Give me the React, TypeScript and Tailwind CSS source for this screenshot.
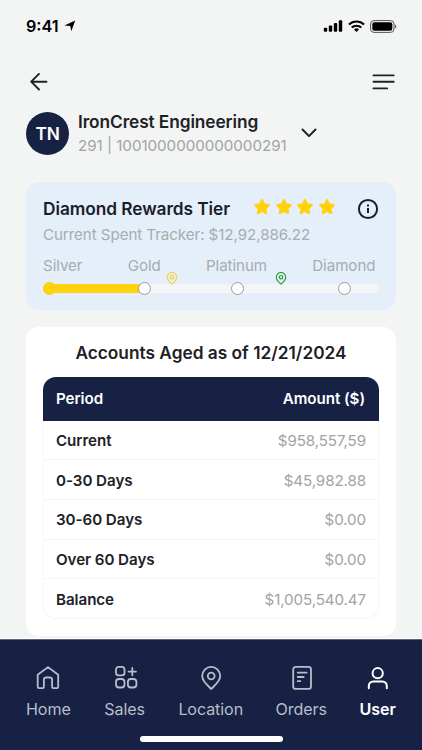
import type { ReactNode } from "react";

const agedAccounts = [
  { period: "Current", amount: "$958,557,59" },
  { period: "0-30 Days", amount: "$45,982.88" },
  { period: "30-60 Days", amount: "$0.00" },
  { period: "Over 60 Days", amount: "$0.00" },
  { period: "Balance", amount: "$1,005,540.47" },
];

const StatusBar = () => {
  return (
    <div className="flex h-[52px] items-center justify-between pr-[25px] pl-[26px] text-black">
      <div className="flex items-center gap-[5px]">
        <span className="w-[33px] text-[16.2px] font-semibold whitespace-nowrap">
          9:41
        </span>
        <svg width="12" height="12" viewBox="0 0 12 12" fill="currentColor">
          <path d="M11.2.6 7.3 11.2 6.2 6 .4 5.5Z" />
        </svg>
      </div>
      <div className="flex items-center gap-[5px]">
        <svg width="20" height="12" viewBox="0 0 20 12" fill="currentColor">
          <rect x="0.8" y="7.8" width="3.4" height="4" rx="1" />
          <rect x="5.8" y="5.6" width="3.4" height="6.2" rx="1" />
          <rect x="10.8" y="3" width="3.4" height="8.8" rx="1" />
          <rect x="15.8" y="0.2" width="3.4" height="11.6" rx="1" />
        </svg>
        <svg width="17" height="12" viewBox="0 0 17 12" fill="none" stroke="currentColor" strokeWidth="2.1">
          <path d="M.9 4.6a11 11 0 0 1 15.2 0" />
          <path d="M3.7 7.6a7 7 0 0 1 9.6 0" />
          <path d="M8.5 12 6 9.4a3.7 3.7 0 0 1 5 0Z" fill="currentColor" stroke="none" />
        </svg>
        <svg width="27" height="13" viewBox="0 0 27 13">
          <rect x="0.6" y="0.6" width="23.4" height="11.8" rx="3.4" fill="none" stroke="#555" />
          <rect x="2.3" y="2.3" width="20" height="8.4" rx="2" fill="currentColor" />
          <path d="M25.2 4.5v4c1.5-.6 1.5-3.4 0-4Z" fill="#444" />
        </svg>
      </div>
    </div>
  );
};

const Pin = ({ className }: { className: string }) => {
  return (
    <svg className={className} width="12" height="13" viewBox="0 0 12 13" fill="none" stroke="currentColor" strokeWidth="1.1">
      <path d="M6 12.2C4.6 10.9 1.3 8.4 1.3 5.2a4.7 4.7 0 0 1 9.4 0c0 3.2-3.3 5.7-4.7 7Z" />
      <circle cx="6" cy="5.2" r="1.7" />
    </svg>
  );
};

const Star = () => {
  return (
    <svg width="18" height="18" viewBox="0 0 18 18" fill="#ffd20c" stroke="#ffd20c" strokeWidth="2.2" strokeLinejoin="round">
      <path d="m9 2.1 2 4.3 4.7.7-3.4 3.3.8 4.6L9 12.8 4.9 15l.8-4.6-3.4-3.3L7 6.4Z" />
    </svg>
  );
};

const RewardsCard = () => {
  return (
    <section className="mx-[26px] mt-[27px] h-[128px] rounded-[13px] bg-[#e5effa] px-[17px] pt-[15px]">
      <div className="flex h-6 items-center">
        <h2 className="w-[210px] text-[17.3px] font-semibold tracking-[-0.06px] whitespace-nowrap text-[#1b1d28]">
          Diamond Rewards Tier
        </h2>
        <div className="flex gap-[3.5px] pb-[4px]">
          <Star />
          <Star />
          <Star />
          <Star />
        </div>
        <svg className="ml-auto" width="22" height="22" viewBox="0 0 22 22" fill="none" stroke="#1b1d28" strokeWidth="2">
          <circle cx="11" cy="11" r="9.1" />
          <path d="M11 10v5" />
          <path d="M11 6.4v2" />
        </svg>
      </div>
      <p className="mt-[4px] text-[15.15px] leading-[20px] tracking-[-0.07px] text-[#a9abaf]">
        Current Spent Tracker: $12,92,886.22
      </p>
      <div className="mt-[11px] flex justify-between pr-[3.5px] text-[15.15px] leading-[20px] tracking-[-0.06px] text-[#a9abaf]">
        <span>Silver</span>
        <span>Gold</span>
        <span>Platinum</span>
        <span>Diamond</span>
      </div>
      <div className="relative mt-[8px] h-[9px] w-[336px] rounded-full bg-[#f4f6f6]">
        <div className="h-full w-[102px] rounded-full bg-[#ffd20c]" />
        <span className="absolute top-[-2px] left-0 size-[13px] rounded-full bg-[#ffd20c]" />
        <span className="absolute top-[-2px] left-[95px] size-[13px] rounded-full border border-[#9b9b9b] bg-white" />
        <span className="absolute top-[-2px] left-[188px] size-[13px] rounded-full border border-[#9b9b9b] bg-white" />
        <span className="absolute top-[-2px] left-[295px] size-[13px] rounded-full border border-[#9b9b9b] bg-white" />
        <Pin className="absolute top-[-12px] left-[123px] text-[#f5d02c]" />
        <Pin className="absolute top-[-12px] left-[232px] text-[#1c9a2c]" />
      </div>
    </section>
  );
};

const AccountsCard = () => {
  return (
    <section className="mx-[26px] mt-[17px] h-[309px] rounded-[13px] bg-white px-[17px] pt-[14px]">
      <h2 className="text-center text-[17.3px] leading-6 font-semibold text-[#202127]">
        Accounts Aged as of 12/21/2024
      </h2>
      <div className="mt-[12px] flex h-[43.5px] items-center justify-between rounded-t-[13px] bg-[#172144] pt-[2px] pr-[14px] pl-[13px] text-[15.15px] font-semibold tracking-[-0.05px] text-white">
        <span>Period</span>
        <span>Amount ($)</span>
      </div>
      <div className="h-[198.5px] rounded-b-[13px] border border-t-0 border-[#f4f5f5]">
        {agedAccounts.map((row) => (
          <div
            key={row.period}
            className="flex h-[39.7px] items-center justify-between border-b border-[#f4f5f5] px-[12px] pt-[3px] text-[15.15px] last:border-b-0"
          >
            <span className="font-semibold tracking-[-0.05px] text-[#202127]">
              {row.period}
            </span>
            <span className="tracking-[-0.1px] text-[#a3a3a3]">
              {row.amount}
            </span>
          </div>
        ))}
      </div>
    </section>
  );
};

interface NavItemProps {
  label: string;
  className: string;
  children: ReactNode;
}
const NavItem = ({ label, className, children }: NavItemProps) => {
  return (
    <a className={`flex flex-col items-center gap-[6px] ${className}`}>
      <svg width="26" height="26" viewBox="0 0 26 26" fill="none" stroke="currentColor" strokeWidth="1.8" strokeLinecap="round" strokeLinejoin="round">
        {children}
      </svg>
      <span className="text-[16.1px] leading-6">{label}</span>
    </a>
  );
};

const BottomNav = () => {
  return (
    <nav className="mt-auto flex h-[111px] flex-col border-t border-[#5b627b] bg-[#172144] shadow-[0_-1px_0_#fff]">
      <div className="flex justify-between px-[26px] pt-[25px] text-[#b9bccb]">
        <NavItem label="Home" className="tracking-[-0.1px]">
          <path d="M2.7 9.8 13 2.1l10.2 7.7v12q0 1.4-1.2 1.4h-3.7q-1.2 0-1.2-1.2v-7.3q0-2.2-2.2-2.2h-3.8q-2.2 0-2.2 2.2V22q0 1.2-1.2 1.2H4q-1.3 0-1.3-1.4Z" />
        </NavItem>
        <NavItem label="Sales" className="ml-[1px] tracking-[-0.1px]">
          <rect x="4" y="1.9" width="8.5" height="8.5" rx="2.6" />
          <rect x="4" y="14" width="8.5" height="8.5" rx="3" />
          <rect x="15.9" y="14" width="8.5" height="8.5" rx="3" />
          <path d="M20.3 2.9v7.4M16.6 6.6H24" />
        </NavItem>
        <NavItem label="Location" className="ml-[1px] tracking-[-0.1px]">
          <path d="M13.2 24c-2.8-3-9-7.500-9-13a9 9.100 0 0 1 18 0c0 5.500-6.200 10-9 13Z" />
          <circle cx="13.2" cy="11" r="3.4" />
        </NavItem>
        <NavItem label="Orders" className="tracking-[-0.1px]">
          <rect x="5.2" y="1.9" width="17.8" height="22" rx="2.5" />
          <path d="M9.7 7.6h9M9.7 12h6M9.7 16.2h2.6" />
        </NavItem>
        <NavItem label="User" className="font-semibold text-white">
          <circle cx="12.7" cy="8.2" r="5.1" strokeWidth="2" />
          <path d="M3.8 23.2V21a4.500 4.500 0 0 1 4.500-4.500h9a4.500 4.500 0 0 1 4.500 4.500v2.200" strokeWidth="2" />
        </NavItem>
      </div>
      <div className="mx-auto mt-auto mb-[8.5px] h-[5.5px] w-[143px] rounded-full bg-white" />
    </nav>
  );
};

export default function App() {
  return (
    <main className="flex h-[750px] w-[422px] flex-col overflow-hidden bg-[#f3f5f5] font-['Inter',sans-serif]">
      <StatusBar />
      <header className="flex h-[59px] items-center justify-between pr-[26.5px] pl-[29px]">
        <svg width="20" height="20" viewBox="0 0 20 20" fill="none" stroke="#202127" strokeWidth="1.9" strokeLinecap="round" strokeLinejoin="round">
          <path d="M17.5 9.7H2.2M10 1.900 2.200 9.700l7.800 7.800" />
        </svg>
        <svg width="24" height="18" viewBox="0 0 24 18" fill="none" stroke="#202127" strokeWidth="1.9" strokeLinecap="round">
          <path d="M1.500 2.400h20.200M1.500 8.800h20.200M1.500 15.400h13.600" />
        </svg>
      </header>
      <section className="flex h-[44px] items-center pl-[26px]">
        <div className="flex size-[43px] items-center justify-center rounded-full bg-[#172144] pt-[2px] text-[17.3px] font-semibold tracking-[-0.3px] text-white">
          TN
        </div>
        <div className="mt-[2px] ml-[9px] w-[209px] whitespace-nowrap">
          <h1 className="text-[17.3px] leading-6 font-semibold tracking-[-0.09px] text-[#202127]">
            IronCrest Engineering
          </h1>
          <p className="text-[15.15px] leading-6 tracking-[-0.02px] text-[#a3a3a3]">
            291 | 1001000000000000291
          </p>
        </div>
        <svg className="ml-[14px]" width="16" height="10" viewBox="0 0 16 10" fill="none" stroke="#202127" strokeWidth="2" strokeLinecap="round" strokeLinejoin="round">
          <path d="M1.500 1.500 8 8.100l6.500-6.600" />
        </svg>
      </section>
      <RewardsCard />
      <AccountsCard />
      <BottomNav />
    </main>
  );
}
